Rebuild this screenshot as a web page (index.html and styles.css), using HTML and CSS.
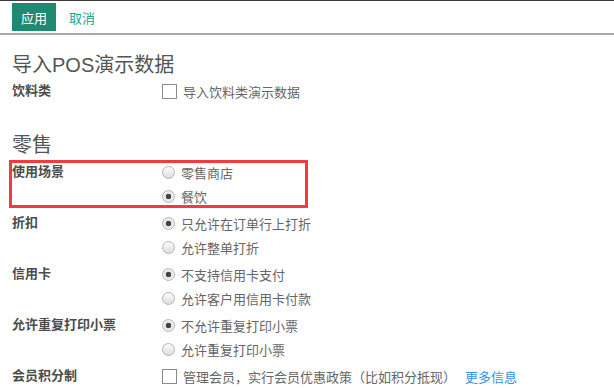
FILE: index.html
```html
<!DOCTYPE html>
<html lang="zh-CN">
<head>
  <meta charset="UTF-8">
  <title>POS 设置</title>
  <link rel="stylesheet" href="styles.css">
</head>
<body>
  <header class="bar">
    <button class="btn-apply">应用</button>
    <a class="btn-cancel" href="#">取消</a>
  </header>
  <main class="settings">
    <h2 class="section-title first">导入POS演示数据</h2>
    <div class="row">
      <div class="label">饮料类</div>
      <div class="opts">
        <label class="opt"><input type="checkbox"> 导入饮料类演示数据</label>
      </div>
    </div>

    <h2 class="section-title">零售</h2>
    <div class="row marked">
      <div class="label">使用场景</div>
      <div class="opts">
        <label class="opt"><input type="radio" name="scene"> 零售商店</label>
        <label class="opt"><input type="radio" name="scene" checked> 餐饮</label>
      </div>
    </div>
    <div class="row">
      <div class="label">折扣</div>
      <div class="opts">
        <label class="opt"><input type="radio" name="disc" checked> 只允许在订单行上打折</label>
        <label class="opt"><input type="radio" name="disc"> 允许整单打折</label>
      </div>
    </div>
    <div class="row">
      <div class="label">信用卡</div>
      <div class="opts">
        <label class="opt"><input type="radio" name="card" checked> 不支持信用卡支付</label>
        <label class="opt"><input type="radio" name="card"> 允许客户用信用卡付款</label>
      </div>
    </div>
    <div class="row">
      <div class="label">允许重复打印小票</div>
      <div class="opts">
        <label class="opt"><input type="radio" name="reprint" checked> 不允许重复打印小票</label>
        <label class="opt"><input type="radio" name="reprint"> 允许重复打印小票</label>
      </div>
    </div>
    <div class="row">
      <div class="label">会员积分制</div>
      <div class="opts">
        <label class="opt"><input type="checkbox"> 管理会员，实行会员优惠政策（比如积分抵现）<a class="more" href="#">更多信息</a></label>
      </div>
    </div>
  </main>
</body>
</html>
```

FILE: styles.css
```css
body { margin: 0; font-family: "Liberation Sans", "Noto Sans CJK SC", sans-serif; font-size: 13px; color: #666; background: #fff; }

.bar { display: flex; align-items: center; gap: 13px; height: 32px; padding: 0 12px; border-top: 1px solid #3a3a3a; border-bottom: 2px solid #a8a8a8; box-sizing: content-box; }
.btn-apply { height: 28px; padding: 0 9px; border: none; background: #1e8a72; color: #fff; font: inherit; font-size: 13px; }
.btn-cancel { color: #21a58a; text-decoration: none; }

.settings { padding: 0 12px; }
.section-title { margin: 30px 0 0; font-size: 20px; line-height: 24px; font-weight: normal; color: #555; }
.section-title.first { margin-top: 18px; }

.row { display: flex; margin-bottom: 3px; }
.section-title.first + .row { margin-top: 2px; }
.section-title + .row.marked { margin-top: 3px; }
.label { width: 150px; line-height: 24px; font-weight: bold; color: #4c4c4c; }
.opts { display: flex; flex-direction: column; }
.opt { display: flex; align-items: center; height: 24px; color: #666; white-space: nowrap; }

.marked { position: relative; width: 296px; }
.marked::after { content: ""; position: absolute; left: -3px; top: 0; width: 293px; height: 42px; border: 3px solid #f03c3c; }

input[type=radio] { appearance: none; width: 13px; height: 13px; margin: 0 6px 0 0; border: 1px solid #b4b4b4; border-radius: 50%; background: linear-gradient(#fdfdfd, #dcdcdc); box-sizing: border-box; }
input[type=radio]:checked { background: radial-gradient(circle, #444 0, #444 2.5px, #e2e2e2 3px, #f4f4f4 6px); }
input[type=checkbox] { appearance: none; width: 15px; height: 15px; margin: 0 6px 0 0; border: 1px solid #8a8a8a; background: #fff; box-sizing: border-box; }
.more { margin-left: 9px; color: #3b8ee0; text-decoration: none; }
```
